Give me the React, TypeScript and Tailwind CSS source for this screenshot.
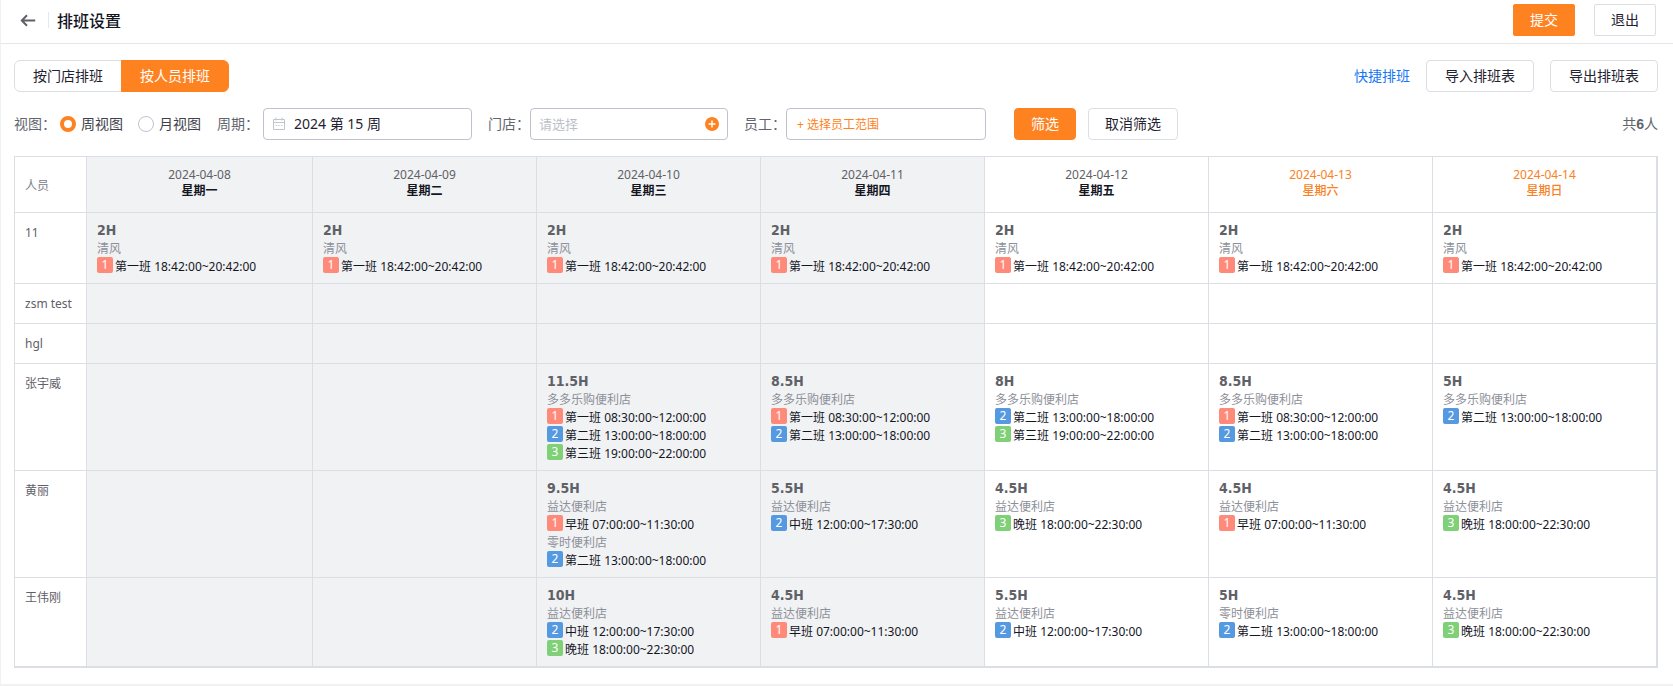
import clsx from "clsx"
import { useState } from "react"

type Shift = {
    no: 1 | 2 | 3;
    name: string;
    time: string;
}

type ShopPlan = {
    shop: string;
    shifts: Shift[];
}

type Cell = {
    hours: string;
    plans: ShopPlan[];
} | null

type Person = {
    name: string;
    cells: Cell[];
}

const DAYS = [
    { date: "2024-04-08", week: "星期一", past: true, weekend: false },
    { date: "2024-04-09", week: "星期二", past: true, weekend: false },
    { date: "2024-04-10", week: "星期三", past: true, weekend: false },
    { date: "2024-04-11", week: "星期四", past: true, weekend: false },
    { date: "2024-04-12", week: "星期五", past: false, weekend: false },
    { date: "2024-04-13", week: "星期六", past: false, weekend: true },
    { date: "2024-04-14", week: "星期日", past: false, weekend: true },
]

const BADGE_COLORS = {
    1: "bg-[#ff8a7a]",
    2: "bg-[#5599e0]",
    3: "bg-[#7fd077]",
}

const QF = "清风"
const DD = "多多乐购便利店"
const YD = "益达便利店"
const LS = "零时便利店"

const dd1: Shift = { no: 1, name: "第一班", time: "08:30:00~12:00:00" }
const dd2: Shift = { no: 2, name: "第二班", time: "13:00:00~18:00:00" }
const dd3: Shift = { no: 3, name: "第三班", time: "19:00:00~22:00:00" }
const early: Shift = { no: 1, name: "早班", time: "07:00:00~11:30:00" }
const middle: Shift = { no: 2, name: "中班", time: "12:00:00~17:30:00" }
const late: Shift = { no: 3, name: "晚班", time: "18:00:00~22:30:00" }

const plan = (hours: string, shop: string, ...shifts: Shift[]): Cell => ({
    hours,
    plans: [{ shop, shifts }],
})

const qf = plan("2H", QF, { no: 1, name: "第一班", time: "18:42:00~20:42:00" })

const PEOPLE: Person[] = [
    { name: "11", cells: [qf, qf, qf, qf, qf, qf, qf] },
    { name: "zsm test", cells: [null, null, null, null, null, null, null] },
    { name: "hgl", cells: [null, null, null, null, null, null, null] },
    {
        name: "张宇威",
        cells: [
            null,
            null,
            plan("11.5H", DD, dd1, dd2, dd3),
            plan("8.5H", DD, dd1, dd2),
            plan("8H", DD, dd2, dd3),
            plan("8.5H", DD, dd1, dd2),
            plan("5H", DD, dd2),
        ],
    },
    {
        name: "黄丽",
        cells: [
            null,
            null,
            { hours: "9.5H", plans: [{ shop: YD, shifts: [early] }, { shop: LS, shifts: [dd2] }] },
            plan("5.5H", YD, middle),
            plan("4.5H", YD, late),
            plan("4.5H", YD, early),
            plan("4.5H", YD, late),
        ],
    },
    {
        name: "王伟刚",
        cells: [
            null,
            null,
            plan("10H", YD, middle, late),
            plan("4.5H", YD, early),
            plan("5.5H", YD, middle),
            plan("5H", LS, dd2),
            plan("4.5H", YD, late),
        ],
    },
]

const BackIcon = () => (
    <svg width="16" height="16" viewBox="0 0 16 16" fill="none" stroke="#5f6167" strokeWidth="2">
        <path d="M15.2 8.5H1.8M7 3.3 1.8 8.5 7 13.7" />
    </svg>
)

const CalendarIcon = () => (
    <svg width="14" height="14" viewBox="0 0 14 14" fill="none" stroke="#c3c5cc" className="absolute left-[9px] top-[9px]">
        <path d="M1.5 2.5h11v10h-11zM1.5 5.5h11M4 .5v3M10 .5v3" />
        <path d="M3.7 8.5h1.4M6.3 8.5h1.4M8.9 8.5h1.4" />
    </svg>
)

const PlusIcon = () => (
    <svg width="14" height="14" viewBox="0 0 14 14">
        <circle cx="7" cy="7" r="7" fill="#ff8221" />
        <path d="M7 3.6v6.8M3.6 7h6.8" stroke="#fff" strokeWidth="1.5" />
    </svg>
)

type ButtonProps = {
    children: React.ReactNode;
    primary?: boolean;
    wide?: boolean;
    square?: boolean;
}
const Button = ({ children, primary, wide, square }: ButtonProps) => (
    <button
        type="button"
        className={clsx(
            "h-8 border text-sm",
            square ? "rounded-[2px]" : "rounded",
            wide ? "px-[18px]" : "px-4",
            primary ? "border-[#ff8221] bg-[#ff8221] text-white" : "border-[#dcdee6] bg-white text-[#1f2230]"
        )}
    >
        {children}
    </button>
)

const ShiftCell = ({ cell }: { cell: Cell }) => {
    if (!cell) return null;

    return (
        <div className="px-[10px] py-2">
            <div className="text-sm leading-[18px] font-bold text-[#5f6167] font-['DejaVu_Sans_Condensed','Noto_Sans',sans-serif]">
                {cell.hours}
            </div>
            {cell.plans.map((p) => (
                <div key={p.shop} className="leading-5">
                    <div className="h-[18px] text-[#8d9099]">{p.shop}</div>
                    {p.shifts.map((s) => (
                        <div key={s.name} className="flex h-[18px] items-start gap-[2px] whitespace-nowrap text-[#14161f]">
                            <span className={clsx("h-4 w-4 rounded-[2px] text-center leading-4 text-white", BADGE_COLORS[s.no])}>
                                {s.no}
                            </span>
                            <span>{s.name} {s.time}</span>
                        </div>
                    ))}
                </div>
            ))}
        </div>
    )
}

export default function App() {
    const [mode, setMode] = useState("person");
    const [view, setView] = useState("week");

    const tabClass = (active: boolean) => clsx(
        "h-8 border px-[18px]",
        active ? "border-[#ff8221] bg-[#ff8221] text-white" : "border-[#dcdee6] bg-white text-[#1f2230]"
    )
    const radioClass = "h-4 w-4 appearance-none rounded-full border border-[#c0c3cd] bg-white checked:border-4 checked:border-[#ff8221]"

    return (
        <div className="min-h-screen bg-[#f1f1f1] text-sm font-['Noto_Sans','Noto_Sans_CJK_SC',sans-serif]">
            <div className="border-l border-[#f1f1f1] bg-white">
                <header className="flex h-11 items-center border-b border-[#e6e7ea] pb-1 pl-[19px] pr-[17px]">
                    <button type="button" aria-label="返回">
                        <BackIcon />
                    </button>
                    <div className="ml-3 h-4 w-px bg-[#e6e7ea]" />
                    <h1 className="ml-2 pt-0.5 text-base font-medium text-[#14161f]">排班设置</h1>
                    <div className="ml-auto flex gap-[19px]">
                        <Button primary square>提交</Button>
                        <Button square>退出</Button>
                    </div>
                </header>

                <main className="pb-4 pl-[13px] pr-[15px] pt-4">
                    <div className="flex items-center">
                        <div className="flex">
                            <button type="button" onClick={() => setMode("shop")} className={clsx("rounded-l-md", tabClass(mode === "shop"))}>
                                按门店排班
                            </button>
                            <button type="button" onClick={() => setMode("person")} className={clsx("-ml-px rounded-r-md", tabClass(mode === "person"))}>
                                按人员排班
                            </button>
                        </div>
                        <div className="ml-auto flex items-center gap-4">
                            <a href="#quick" className="text-[#1677f5]">快捷排班</a>
                            <Button wide>导入排班表</Button>
                            <Button wide>导出排班表</Button>
                        </div>
                    </div>

                    <div className="mt-4 flex items-center whitespace-nowrap text-[#62656e]">
                        <span>视图：</span>
                        <label className="ml-1 flex items-center gap-[5px] text-[#3f424b]">
                            <input type="radio" name="view" checked={view === "week"} onChange={() => setView("week")} className={radioClass} />
                            周视图
                        </label>
                        <label className="ml-[15px] flex items-center gap-[5px] text-[#3f424b]">
                            <input type="radio" name="view" checked={view === "month"} onChange={() => setView("month")} className={radioClass} />
                            月视图
                        </label>
                        <label htmlFor="period" className="ml-4">周期：</label>
                        <div className="relative ml-1 w-[209px]">
                            <CalendarIcon />
                            <input
                                id="period"
                                type="text"
                                defaultValue="2024 第 15 周"
                                className="h-8 w-full rounded border border-[#c0c3cd] pb-0.5 pl-[30px] text-[#1f2230]"
                            />
                        </div>
                        <label htmlFor="shop" className="ml-4">门店：</label>
                        <div className="flex h-8 w-[198px] items-center rounded border border-[#c0c3cd] px-2">
                            <input
                                id="shop"
                                type="text"
                                placeholder="请选择"
                                className="min-w-0 flex-1 text-[13px] outline-none placeholder:text-[#bcbfc8]"
                            />
                            <button type="button" aria-label="选择门店">
                                <PlusIcon />
                            </button>
                        </div>
                        <label htmlFor="staff" className="ml-4">员工：</label>
                        <button
                            id="staff"
                            type="button"
                            className="h-8 w-[200px] rounded border border-[#c0c3cd] px-[10px] pt-0.5 text-left text-xs text-[#ff8221]"
                        >
                            + 选择员工范围
                        </button>
                        <div className="ml-7 flex gap-3">
                            <Button primary>筛选</Button>
                            <Button>取消筛选</Button>
                        </div>
                        <div className="ml-auto">
                            共<span className="font-bold font-['Liberation_Sans',sans-serif]">6</span>人
                        </div>
                    </div>

                    <div className="mt-4 border border-[#dcdee6]">
                        <table className="w-full table-fixed border-separate border-spacing-0 text-xs">
                            <colgroup>
                                <col className="w-[72px]" />
                                <col className="w-[226px]" />
                                <col span={6} />
                            </colgroup>
                            <thead>
                                <tr className="h-14">
                                    <th scope="col" className="border-b border-r border-[#dcdee6] pl-[10px] pt-0.5 text-left font-normal text-[#7d8089]">
                                        人员
                                    </th>
                                    {DAYS.map((d) => (
                                        <th
                                            key={d.date}
                                            scope="col"
                                            className={clsx(
                                                "border-b border-r border-[#dcdee6] pb-[3px] leading-4",
                                                d.past && "bg-[#f1f2f4]"
                                            )}
                                        >
                                            <div className={clsx("font-normal", d.weekend ? "text-[#f98123]" : "text-[#5f6167]")}>{d.date}</div>
                                            <div className={clsx(d.weekend ? "font-medium text-[#f98123]" : "font-bold text-[#14161f]")}>{d.week}</div>
                                        </th>
                                    ))}
                                </tr>
                            </thead>
                            <tbody>
                                {PEOPLE.map((person) => (
                                    <tr key={person.name} className="h-10 align-top">
                                        <th scope="row" className="border-b border-r border-[#dcdee6] pl-[10px] text-left font-normal leading-[39px] text-[#5f6167]">
                                            {person.name}
                                        </th>
                                        {person.cells.map((cell, index) => (
                                            <td
                                                key={DAYS[index].date}
                                                className={clsx(
                                                    "border-b border-r border-[#dcdee6]",
                                                    DAYS[index].past && "bg-[#f1f2f4]"
                                                )}
                                            >
                                                <ShiftCell cell={cell} />
                                            </td>
                                        ))}
                                    </tr>
                                ))}
                            </tbody>
                        </table>
                    </div>
                </main>
            </div>
        </div>
    )
}
